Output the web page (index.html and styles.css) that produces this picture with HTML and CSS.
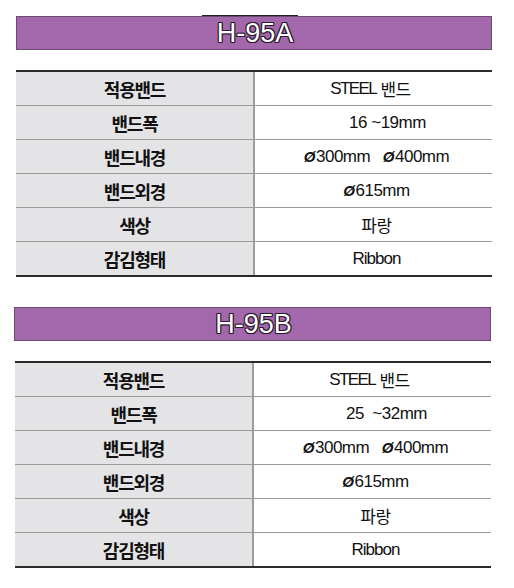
FILE: index.html
```html
<!DOCTYPE html>
<html lang="ko">
<head>
<meta charset="utf-8">
<link rel="stylesheet" href="styles.css">
</head>
<body>
<div class="page">
  <section class="model model-a">
    <div class="tab-line"></div>
    <div class="title-bar"><span class="title">H-95A</span></div>
    <div class="spec">
      <div class="row"><div class="key">적용밴드</div><div class="val shift-l"><span class="latin-tight">STEEL</span>&nbsp;밴드</div></div>
      <div class="row"><div class="key">밴드폭</div><div class="val shift-r">16 ~19mm</div></div>
      <div class="row"><div class="key">밴드내경</div><div class="val"><span class="phi">Ø</span>300mm&nbsp;&nbsp;&nbsp;<span class="phi">Ø</span>400mm</div></div>
      <div class="row"><div class="key">밴드외경</div><div class="val"><span class="phi">Ø</span>615mm</div></div>
      <div class="row"><div class="key">색상</div><div class="val">파랑</div></div>
      <div class="row"><div class="key">감김형태</div><div class="val narrow">Ribbon</div></div>
    </div>
  </section>
  <section class="model model-b">
    <div class="title-bar"><span class="title">H-95B</span></div>
    <div class="spec">
      <div class="row"><div class="key">적용밴드</div><div class="val shift-l"><span class="latin-tight">STEEL</span>&nbsp;밴드</div></div>
      <div class="row"><div class="key">밴드폭</div><div class="val shift-r">25 &nbsp;~32mm</div></div>
      <div class="row"><div class="key">밴드내경</div><div class="val"><span class="phi">Ø</span>300mm&nbsp;&nbsp;&nbsp;<span class="phi">Ø</span>400mm</div></div>
      <div class="row"><div class="key">밴드외경</div><div class="val"><span class="phi">Ø</span>615mm</div></div>
      <div class="row"><div class="key">색상</div><div class="val">파랑</div></div>
      <div class="row"><div class="key">감김형태</div><div class="val narrow">Ribbon</div></div>
    </div>
  </section>
</div>
</body>
</html>
```
FILE: styles.css
```css
html, body {
  margin: 0;
  padding: 0;
  background: #ffffff;
}
body {
  width: 514px;
  height: 588px;
  overflow: hidden;
  font-family: "Liberation Sans", "Noto Sans CJK KR", sans-serif;
  color: #111;
}
.page {
  display: flex;
  flex-direction: column;
  padding-top: 16px;
}
.model {
  display: flex;
  flex-direction: column;
}
.model-a {
  margin-left: 16px;
  width: 476px;
}
.model-b {
  margin-left: 14px;
  width: 477px;
  margin-top: 30px;
}
.tab-line {
  width: 96px;
  height: 1px;
  background: #222;
  margin-left: 186px;
  margin-top: -1px;
}
.title-bar {
  height: 34px;
  box-sizing: border-box;
  background: #a268ab;
  border: 1px solid #6d4a72;
  display: flex;
  align-items: center;
  justify-content: center;
}
.title {
  font-family: "Liberation Sans", sans-serif;
  font-size: 27px;
  color: #ffffff;
  text-shadow:
    1px 0 0 #2a1a2c, -1px 0 0 #2a1a2c, 0 1px 0 #2a1a2c, 0 -1px 0 #2a1a2c,
    1px 1px 0 #2a1a2c, -1px -1px 0 #2a1a2c, 1px -1px 0 #2a1a2c, -1px 1px 0 #2a1a2c;
  line-height: 1;
  padding-top: 1px;
  margin-left: 2px;
}
.spec {
  margin-top: 20px;
  border-top: 2px solid #2b2b2b;
  border-bottom: 2px solid #2b2b2b;
  display: flex;
  flex-direction: column;
}
.model-b .spec {
  margin-left: 1px;
}
.row {
  display: grid;
  grid-template-columns: 239px 1fr;
  height: 34px;
  box-sizing: border-box;
  border-bottom: 1px solid #9a9a9a;
}
.row:last-child {
  border-bottom: none;
  height: 33px;
}
.key {
  background: #e4e4e6;
  border-right: 2px solid #9c9c9c;
  display: flex;
  align-items: center;
  justify-content: center;
  font-family: "Noto Sans CJK KR", sans-serif;
  font-weight: 700;
  font-size: 18px;
  letter-spacing: -1.2px;
  color: #111;
}
.val {
  display: flex;
  align-items: center;
  justify-content: center;
  font-family: "Liberation Sans", "Noto Sans CJK KR", sans-serif;
  font-size: 17px;
  letter-spacing: -0.5px;
  color: #111;
  padding-left: 6px;
}
.val.narrow {
  letter-spacing: -1px;
}
.latin-tight {
  letter-spacing: -1.6px;
}
.val.shift-l {
  padding-left: 0;
  padding-right: 6px;
}
.val.shift-r {
  padding-left: 28px;
}
.phi {
  font-weight: 700;
  font-style: italic;
  font-size: 15px;
  margin-right: 1px;
}
```
